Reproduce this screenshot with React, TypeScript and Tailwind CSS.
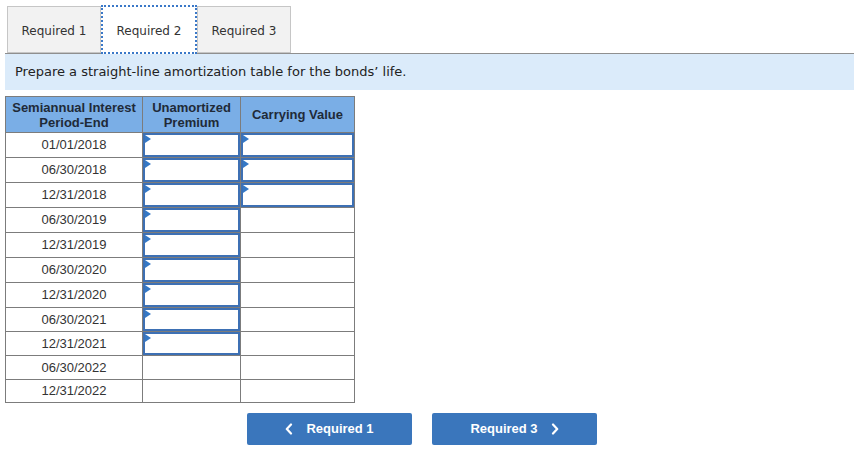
import React from 'react';

const dates = [
  '01/01/2018', '06/30/2018', '12/31/2018', '06/30/2019', '12/31/2019', '06/30/2020',
  '12/31/2020', '06/30/2021', '12/31/2021', '06/30/2022', '12/31/2022',
];
const heights = [25, 25, 25, 25, 25, 25, 25, 24, 24, 24, 23];

const InputCell: React.FC = () => (
  <div className="relative h-full w-full border-2 border-[#3d70b4] bg-white">
    <span className="absolute left-0 top-0 h-0 w-0 border-y-[4px] border-l-[6px] border-y-transparent border-l-[#3478c6]" />
  </div>
);

const App: React.FC = () => {
  const tabs = ['Required 1', 'Required 2', 'Required 3'];

  return (
    <div className="min-h-screen bg-white pl-[5px] pt-[5px] text-[#333]">
      <div className="ml-[2px] flex items-end" style={{ fontFamily: '"DejaVu Sans", Verdana, sans-serif' }}>
        {tabs.map((t, i) =>
          i === 1 ? (
            <div key={t} className="relative z-10 -mb-px flex h-[49px] w-[96px] items-center justify-center border-2 border-dotted border-[#3a78c8] bg-white pt-[2px] text-[12px]">
              {t}
            </div>
          ) : (
            <div key={t} className="flex h-[47px] w-[94px] items-center justify-center border border-[#c6c6c6] bg-[#f2f2f2] pt-[2px] text-[12px]">
              {t}
            </div>
          )
        )}
      </div>
      <div className="border-t border-[#8f8f8f]" />
      <div
        className="flex h-[36px] items-center bg-[#dbebfa] pl-[10px] text-[13px] text-[#222]"
        style={{ fontFamily: '"DejaVu Sans", Verdana, sans-serif' }}
      >
        Prepare a straight-line amortization table for the bonds’ life.
      </div>

      <div className="mt-[6px] w-[350px] border-l border-t border-[#7c7c7c] text-[13px]" style={{ fontFamily: '"Liberation Sans", Arial, sans-serif' }}>
        <div className="flex h-[36px] bg-[#7aaee6] font-bold leading-[15px] text-[#1f2a38]">
          <div className="flex w-[137px] flex-col items-center justify-center border-b border-r border-[#7c7c7c] text-center">
            <span>Semiannual Interest</span>
            <span>Period-End</span>
          </div>
          <div className="flex w-[98px] flex-col items-center justify-center border-b border-r border-[#7c7c7c] text-center">
            <span>Unamortized</span>
            <span>Premium</span>
          </div>
          <div className="flex w-[114px] items-center justify-center border-b border-r border-[#7c7c7c]">
            Carrying Value
          </div>
        </div>
        {dates.map((d, i) => (
          <div key={d} className="flex" style={{ height: heights[i] }}>
            <div className="flex w-[137px] items-center justify-center border-b border-r border-[#7c7c7c] text-[#333]">
              {d}
            </div>
            <div className="w-[98px] border-b border-r border-[#7c7c7c]">
              {i < 9 && <InputCell />}
            </div>
            <div className="w-[114px] border-b border-r border-[#7c7c7c]">
              {i < 3 && <InputCell />}
            </div>
          </div>
        ))}
      </div>

      <div className="ml-[242px] mt-[10px] flex gap-[20px] text-[13px] font-bold text-white" style={{ fontFamily: '"Liberation Sans", Arial, sans-serif' }}>
        <button className="flex h-[32px] w-[165px] items-center justify-center gap-[13px] rounded-[2px] bg-[#3a76bc]">
          <svg width="8" height="12" viewBox="0 0 8 12" fill="none" stroke="white" strokeWidth="2.2" strokeLinecap="round" strokeLinejoin="round">
            <path d="M6 1.5 1.8 6 6 10.5" />
          </svg>
          <span>Required 1</span>
        </button>
        <button className="flex h-[32px] w-[165px] items-center justify-center gap-[13px] rounded-[2px] bg-[#3a76bc]">
          <span>Required 3</span>
          <svg width="8" height="12" viewBox="0 0 8 12" fill="none" stroke="white" strokeWidth="2.2" strokeLinecap="round" strokeLinejoin="round">
            <path d="M2 1.5 6.2 6 2 10.5" />
          </svg>
        </button>
      </div>
    </div>
  );
};

export default App;
